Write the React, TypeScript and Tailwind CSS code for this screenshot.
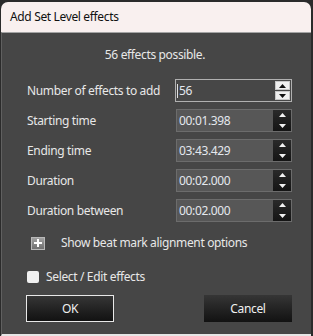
const font = { fontFamily: '"Noto Sans", "Open Sans", sans-serif', letterSpacing: "-0.35px" }

function Arrow({ up, color }: { up?: boolean; color: string }) {
  return (
    <svg width="7" height="4" viewBox="0 0 7 4" className="block">
      {up ? <path d="M3.5 0 L7 4 L0 4 Z" fill={color} /> : <path d="M0 0 L7 0 L3.5 4 Z" fill={color} />}
    </svg>
  )
}

function SpinField({ value, focused }: { value: string; focused?: boolean }) {
  if (focused) {
    return (
      <div className="w-[117px] h-[23px] border border-[#b0b0b0] bg-[#474747] flex items-center">
        <div className="flex-1 flex items-center pl-[1px] text-[12px] text-[#e4e8ee]">
          <span className="w-px h-[14px] bg-[#e0e0e0] mr-[1px]" />
          {value}
        </div>
        <div className="w-[15px] mr-[1px] flex flex-col gap-px">
          <div className="h-[9px] bg-[#f0f0f0] border border-[#c8c8c8] flex items-center justify-center">
            <Arrow up color="#111" />
          </div>
          <div className="h-[9px] bg-[#f0f0f0] border border-[#c8c8c8] flex items-center justify-center">
            <Arrow color="#111" />
          </div>
        </div>
      </div>
    )
  }
  return (
    <div className="w-[116px] h-[23px] border border-[#6c6c6c] bg-[#575757] flex">
      <div className="flex-1 flex items-center pl-[2px] text-[12px] text-[#e4e8ee]">{value}</div>
      <div className="w-[18px] bg-gradient-to-b from-[#2a2a2a] to-[#141414] flex flex-col">
        <div className="flex-1 flex items-center justify-center">
          <Arrow up color="#f2f2f2" />
        </div>
        <div className="flex-1 flex items-center justify-center">
          <Arrow color="#f2f2f2" />
        </div>
      </div>
    </div>
  )
}

const rows = [
  { label: "Number of effects to add", value: "56", focused: true },
  { label: "Starting time", value: "00:01.398" },
  { label: "Ending time", value: "03:43.429" },
  { label: "Duration", value: "00:02.000" },
  { label: "Duration between", value: "00:02.000" },
]

export default function App() {
  return (
    <div className="w-[313px] h-[336px] bg-[#2b2b2b] pt-[2px] pl-[1px] pr-[2px] overflow-hidden" style={font}>
      <div className="h-full rounded-t-[7px] overflow-hidden flex flex-col">
        <div className="h-[30px] shrink-0 bg-[#f9f0ef] pl-[9px] flex items-center text-[12px] text-[#111]">
          Add Set Level effects
        </div>
        <div className="flex-1 bg-[#464646] border-t border-[#a4a4a4] border-l border-l-[#606060] border-b-2 border-b-[#e6e6e6] pl-[24px] pr-[19px] text-[12px] text-[#e8e8e8]">
          <div className="h-[46px] flex items-center justify-center pr-[8px] pb-[2px]">56 effects possible.</div>
          <div className="flex flex-col gap-[7px] pl-px">
            {rows.map((r) => (
              <div key={r.label} className="flex items-center justify-between">
                <span>{r.label}</span>
                <SpinField value={r.value} focused={r.focused} />
              </div>
            ))}
          </div>
          <div className="mt-[14px] flex items-center gap-[16px] pl-[5px] h-[14px]">
            <div className="w-[14px] h-[13px] border border-[#b8b8b8] bg-gradient-to-b from-[#a0a0a0] to-[#707070] flex items-center justify-center">
              <svg width="8" height="8" viewBox="0 0 8 8">
                <path d="M3 0h2v3h3v2H5v3H3V5H0V3h3z" fill="#fff" />
              </svg>
            </div>
            <span>Show beat mark alignment options</span>
          </div>
          <div className="mt-[21px] h-[12px] flex items-center gap-[7px] pl-px">
            <div className="w-[12px] h-[12px] rounded-[2px] bg-[#f0f0f0]" />
            <span>Select / Edit effects</span>
          </div>
          <div className="mt-[12px] flex justify-between">
            <button className="w-[88px] h-[27px] border border-[#e8e8e8] bg-gradient-to-b from-[#363636] to-[#121212] text-[12px] text-[#f0f0f0]">
              OK
            </button>
            <button className="w-[88px] h-[27px] bg-gradient-to-b from-[#363636] to-[#121212] text-[12px] text-[#f0f0f0]">
              Cancel
            </button>
          </div>
        </div>
      </div>
    </div>
  )
}
